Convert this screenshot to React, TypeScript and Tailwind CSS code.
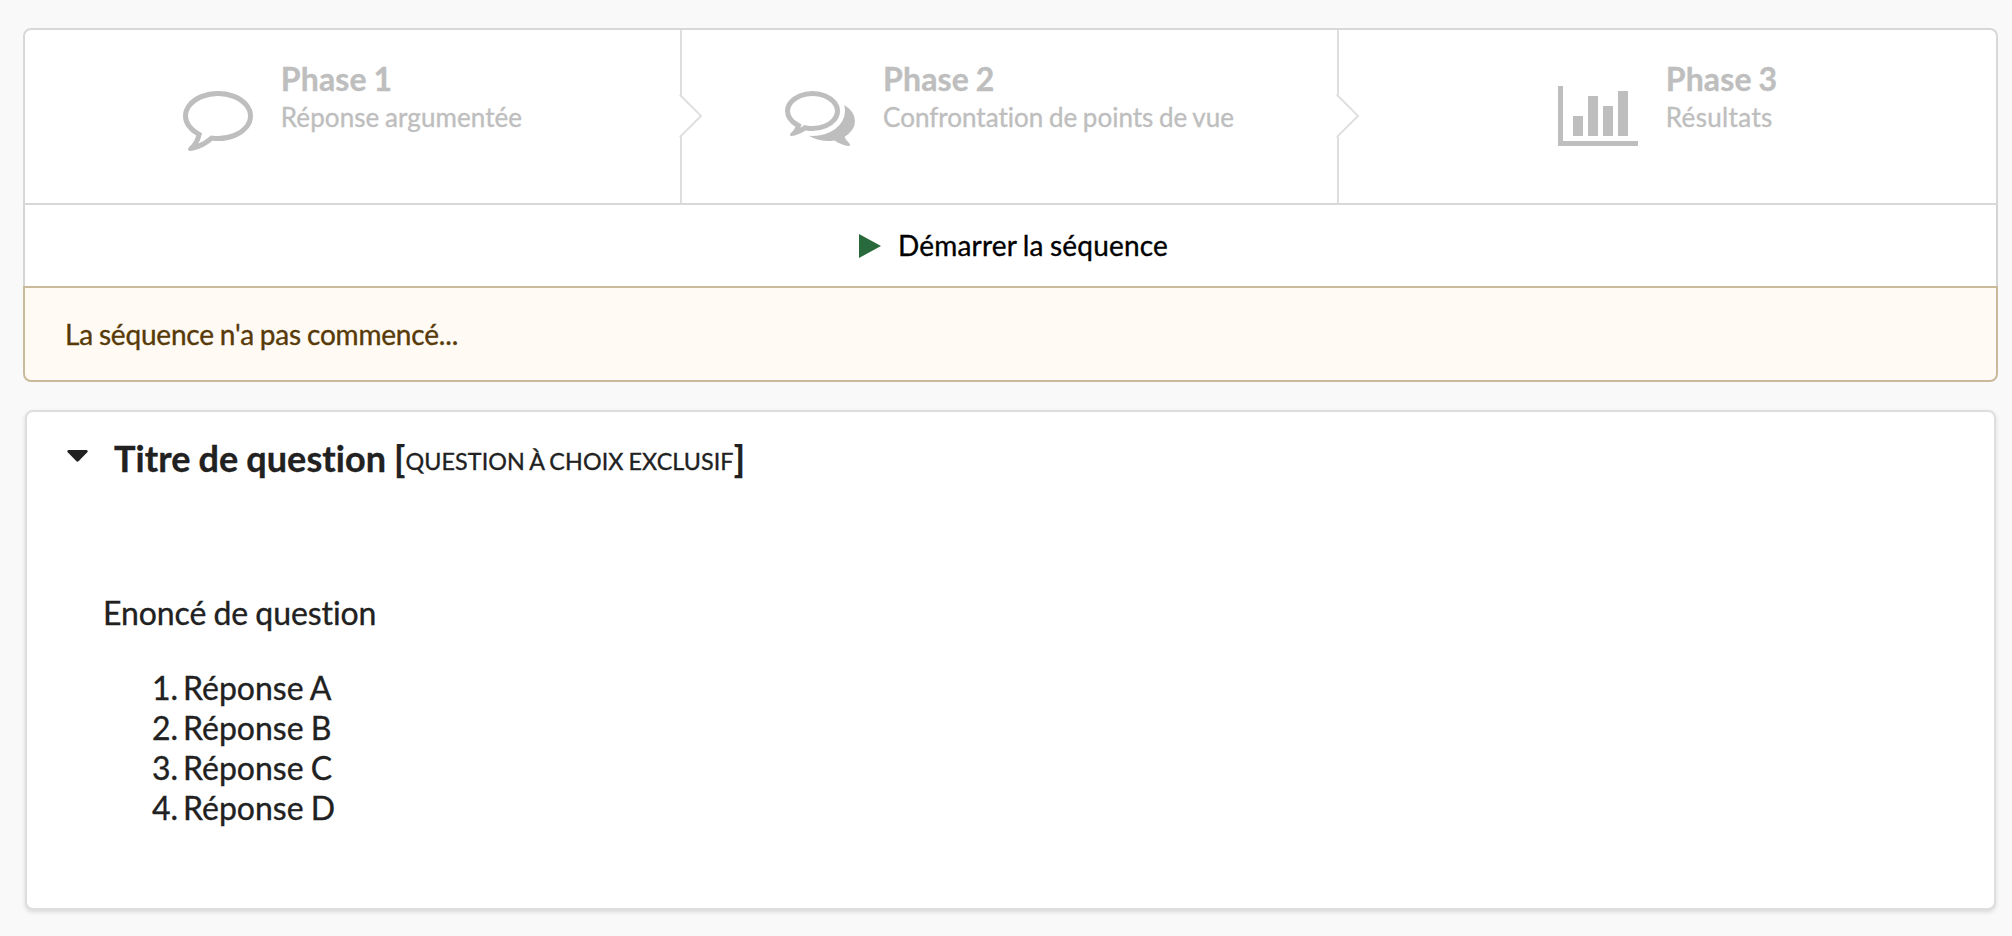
import React from "react";

const CommentIcon = () => (
  <svg className="size-[70px] shrink-0 fill-current" viewBox="0 0 1792 1792">
    <path d="M896 384q-204 0-381.5 69.5t-282 187.5-104.5 255q0 112 71.5 213.5t201.5 175.5l87 50-27 96q-24 91-70 172 152-63 275-171l43-38 57 6q69 8 130 8 204 0 381.5-69.5t282-187.5 104.5-255-104.5-255-282-187.5-381.5-69.5zm896 512q0 174-120 321.5t-326 233-450 85.5q-70 0-145-8-198 175-460 242-49 14-114 22h-5q-15 0-27-10.5t-16-27.5v-1q-3-4-.5-12t2-10 4.5-9.5l6-9 7-8.5 8-9q7-8 31-34.5t34.5-38 31-39.5 32.5-51 27-59 26-76q-157-89-247.5-220t-90.5-281q0-174 120-321.5t326-233 450-85.5 450 85.5 326 233 120 321.5z" />
  </svg>
);

const CommentsIcon = () => (
  <svg className="size-[70px] shrink-0 fill-current" viewBox="0 0 1792 1792">
    <path d="M704 384q-153 0-286 52t-211.5 141-78.5 191q0 82 53 158t149 132l97 56-35 84q34-20 62-39l44-31 53 10q78 14 153 14 153 0 286-52t211.5-141 78.5-191-78.5-191-211.5-141-286-52zm0-128q191 0 353.5 68.5t256.5 186.5 94 257-94 257-256.5 186.5-353.5 68.5q-86 0-176-16-124 88-278 128-36 9-86 16h-3q-11 0-20.5-8t-11.5-21q-1-3-1-6.5t.5-6.5 2-6l2.5-5 3.5-5.5 4-5 4.5-5 4-4.5q5-6 23-25t26-29.5 22.5-29 25-38.5 20.5-44q-124-72-195-177t-71-224q0-139 94-257t256.5-186.5 353.5-68.5zm822 1169q10 24 20.5 44t25 38.5 22.5 29 26 29.5 23 25q1 1 4 4.5t4.5 5 4 5 3.5 5.5l2.5 5 2 6 .5 6.5-1 6.5q-3 14-13 22t-22 7q-50-7-86-16-154-40-278-128-90 16-176 16-271 0-472-132 58 4 88 4 161 0 309-45t264-129q125-92 192-212t67-254q0-77-23-152 129 71 204 178t75 230q0 120-71 224.5t-195 176.5z" />
  </svg>
);

const ChartIcon = () => (
  <svg className="h-[70px] w-20 shrink-0 fill-current" viewBox="0 0 80 70">
    <path d="M0 5h5v55h75v5H0zM15 35h10v20H15zM30 15h10v40H30zM45 25h10v30H45zM60 10h10v45H60z" />
  </svg>
);

const Chevron = () => (
  <svg className="absolute -right-[23px] top-[63px] z-10 h-12 w-6" viewBox="0 0 24 48">
    <path d="M0 2H3L22 22.9 3 44H0z" fill="#fff" />
    <path d="M0.8 1.7 22 22.9 0.8 44.1" fill="none" stroke="#dfdfdf" strokeWidth="2" />
  </svg>
);

interface PhaseProps {
  icon: React.ReactNode;
  title: string;
  text: React.ReactNode;
  last?: boolean;
}

const Phase = ({ icon, title, text, last }: PhaseProps) => (
  <div
    className={
      last
        ? "relative flex w-[657px] justify-center pt-[51px]"
        : "relative flex w-[657px] justify-center border-r-2 border-[#dedede] pt-[51px]"
    }
  >
    {icon}
    <div className="ml-7 -mt-[21px]">
      <div className="text-[32px] font-bold leading-[38px] tracking-[0.12px]">{title}</div>
      <div className="text-[26px] leading-[38px]">{text}</div>
    </div>
    {!last && <Chevron />}
  </div>
);

const answers = ["Réponse A", "Réponse B", "Réponse C", "Réponse D"];

export default function App() {
  return (
    <div className="h-[936px] w-[2012px] overflow-hidden bg-[#f9f9f9] pt-7 font-['Lato',sans-serif] text-[28px] text-[#212121] [-webkit-text-stroke:0.35px_currentColor] [font-variant-ligatures:none] [word-spacing:-1px]">
      <div className="ml-[23px] w-[1975px]">
        <div className="flex h-[177px] rounded-t-lg border-2 border-[#d8d8d8] bg-white text-[#bebebe]">
          <Phase
            icon={<CommentIcon />}
            title="Phase 1"
            text={<span className="tracking-[0.08px]">Réponse argumentée</span>}
          />
          <Phase icon={<CommentsIcon />} title="Phase 2" text="Confrontation de points de vue" />
          <Phase
            icon={<ChartIcon />}
            title="Phase 3"
            text={<span className="tracking-[0.35px]">Résultats</span>}
            last
          />
        </div>
        <div className="flex h-[81px] items-center justify-center border-x-2 border-[#d4d4d5] bg-white pl-[6px] text-black">
          <svg className="mr-[17px] h-6 w-[22px] fill-[#286a3c]" viewBox="0 0 22 24">
            <path d="M0 0 22 12 0 24z" />
          </svg>
          <span className="pb-0.5 leading-10 tracking-[0.18px]">Démarrer la séquence</span>
        </div>
        <div className="flex h-24 items-center rounded-b-lg border-2 border-[#c9ba9b] bg-[#fffbf4] px-10 tracking-[-0.19px] text-[#573a08]">
          La séquence n'a pas commencé...
        </div>
      </div>

      <div className="ml-[25px] mt-7 h-[500px] w-[1971px] rounded-lg border-2 border-[#dedede] bg-white px-10 pt-6 shadow-[0_2px_4px_0_rgba(34,36,38,0.15)]">
        <div className="flex h-[46px] items-start">
          <svg className="mt-[14px] h-3 w-[21px] fill-current" viewBox="0 0 21 12">
            <path d="M1.5 0h18q2 .6.8 2.2L11.5 11.2q-1 .9-2 0L.7 2.2Q-.4.6 1.5 0z" />
          </svg>
          <h2 className="-mt-px ml-[26px] whitespace-nowrap text-[36px] font-bold leading-[46px] tracking-[0.1px]">
            Titre de question [<span className="align-[2px] text-[23.3px] font-normal uppercase leading-none tracking-[0.1px]">Question à choix exclusif</span>]
          </h2>
        </div>
        <div className="ml-9 mt-[106px] text-[32px] leading-10">
          <p className="pt-[5px] tracking-[-0.07px]">Enoncé de question</p>
          <ol className="mt-[35px]">
            {answers.map((answer, i) => (
              <li key={answer} className="flex">
                <span className="w-[75px] text-right">{i + 1}.</span>
                <span className="ml-[5px]">{answer}</span>
              </li>
            ))}
          </ol>
        </div>
      </div>
    </div>
  );
}
